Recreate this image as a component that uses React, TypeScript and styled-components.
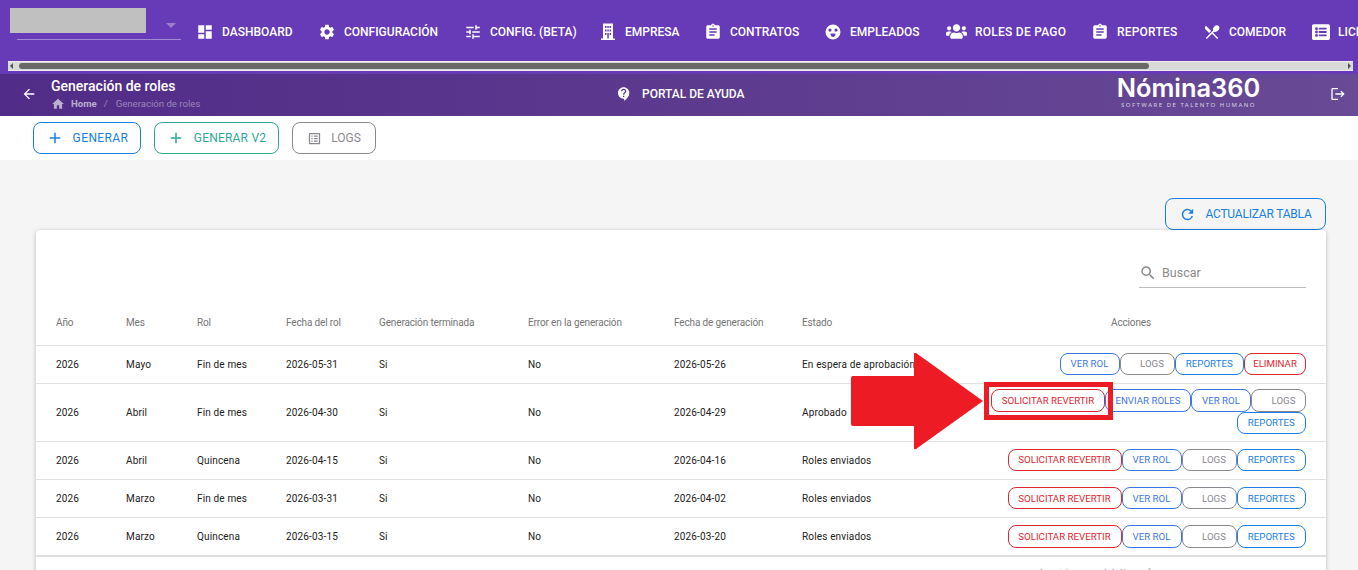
import React from 'react';
import styled, { createGlobalStyle } from 'styled-components';
import {
  MdDashboard, MdSettings, MdTune, MdAssignment, MdRestaurantMenu,
  MdArrowBack, MdHome, MdContactSupport, MdLogout, MdAdd, MdOutlineListAlt, MdRefresh, MdSearch,
} from 'react-icons/md';
import { FaUsers, FaListAlt } from 'react-icons/fa';

const GlobalStyle = createGlobalStyle`
  html, body { margin: 0; padding: 0; height: 100%; overflow: hidden; }
  body { font-family: Roboto, "Liberation Sans", sans-serif; background: #f5f5f5; }
`;

const Page = styled.div`
  position: relative;
  width: 1358px;
  height: 570px;
  overflow: hidden;
`;

const TopBar = styled.header`
  height: 74px;
  background: #673ab7;
  display: flex;
  flex-direction: column;
`;

const TopRow = styled.div`
  height: 61px;
  padding-left: 17px;
  display: flex;
  align-items: flex-start;
  overflow: hidden;
`;

const CompanySelect = styled.div`
  position: relative;
  flex: 0 0 164px;
  height: 39px;
  border-bottom: 1px solid rgba(255, 255, 255, 0.4);
  margin-right: 15px;
`;

const Redaction = styled.div`
  position: absolute;
  left: -7px;
  top: 8px;
  width: 136px;
  height: 25px;
  background: #c0c0c0;
`;

const Caret = styled.span`
  position: absolute;
  right: 5px;
  top: 23px;
  border-left: 5px solid transparent;
  border-right: 5px solid transparent;
  border-top: 5px solid rgba(255, 255, 255, 0.35);
`;

const Menu = styled.nav`
  display: flex;
  height: 63px;
  align-items: center;
  flex: none;
`;

const MenuItem = styled.a<{ $width: number; $tracking?: number }>`
  flex: 0 0 ${(p) => p.$width}px;
  display: flex;
  align-items: center;
  gap: 8px;
  color: #fff;
  font-size: 12px;
  font-weight: 500;
  letter-spacing: ${(p) => p.$tracking ?? 0}px;
  white-space: nowrap;
  svg { flex: none; }
`;

const ScrollTrack = styled.div`
  height: 10px;
  margin: 0 5px 0 8px;
  background: #d9d9d9;
  display: flex;
  align-items: center;
  border-top: 1px solid #eee;
  border-bottom: 1px solid #eee;
  box-sizing: border-box;
`;

const ScrollArrow = styled.span<{ $dir: 'left' | 'right' }>`
  flex: none;
  width: 0;
  height: 0;
  margin: 0 2px;
  border-top: 3px solid transparent;
  border-bottom: 3px solid transparent;
  ${(p) => (p.$dir === 'left' ? 'border-right: 3px solid #505050;' : 'border-left: 3px solid #505050;')}
`;

const ScrollThumb = styled.span`
  margin-left: 4px;
  width: 1130px;
  height: 6px;
  border-radius: 3px;
  background: #686868;
`;

const ScrollRest = styled.span`
  flex: 1;
`;

const SubHeader = styled.div`
  height: 42px;
  box-sizing: border-box;
  background: linear-gradient(90deg, #512c88 0%, #5c3a8e 50%, #684a96 100%);
  color: #fff;
  display: grid;
  grid-template-columns: 595px 501px 1fr auto;
  align-items: center;
  padding: 0 12px 2px 21px;
`;

const TitleGroup = styled.div`
  display: flex;
  align-items: center;
  gap: 14px;
`;

const TitleBlock = styled.div`
  display: flex;
  flex-direction: column;
  gap: 2px;
`;

const PageTitle = styled.div`
  font-size: 14px;
  font-weight: 500;
  line-height: 17px;
`;

const Crumbs = styled.div`
  display: flex;
  align-items: center;
  font-size: 9.6px;
  line-height: 14px;
  color: rgba(255, 255, 255, 0.42);
`;

const CrumbHome = styled.span`
  display: flex;
  align-items: center;
  gap: 6px;
  font-weight: 700;
  color: rgba(255, 255, 255, 0.62);
`;

const CrumbSep = styled.span`
  margin: 0 8px 0 7px;
`;

const HelpLink = styled.div`
  display: flex;
  align-items: center;
  gap: 10px;
  font-size: 12px;
  font-weight: 500;
`;

const Logo = styled.div`
  display: flex;
  flex-direction: column;
  align-items: center;
  width: 143px;
`;

const LogoName = styled.div`
  font-family: Inter, sans-serif;
  font-size: 25.4px;
  font-weight: 600;
  line-height: 24px;
  margin-top: -3px;
`;

const LogoTag = styled.div`
  font-family: "Noto Sans", sans-serif;
  font-size: 6px;
  line-height: 8px;
  margin-top: 1px;
  letter-spacing: 1.5px;
  color: rgba(255, 255, 255, 0.75);
  white-space: nowrap;
`;

const LogoutIcon = styled(MdLogout)`
  margin-left: 70px;
`;

const Toolbar = styled.div`
  height: 44px;
  background: #fff;
  display: flex;
  gap: 13px;
  padding: 6px 0 0 33px;
  box-sizing: border-box;
`;

const OutlineButton = styled.button<{ $color: string; $width: number; $tracking?: number }>`
  width: ${(p) => p.$width}px;
  height: 32px;
  box-sizing: border-box;
  border: 1px solid ${(p) => p.$color};
  border-radius: 8px;
  background: transparent;
  color: ${(p) => p.$color};
  font-family: inherit;
  font-size: 12px;
  font-weight: 400;
  letter-spacing: ${(p) => p.$tracking ?? 0}px;
  padding: 0;
  display: flex;
  align-items: center;
  justify-content: center;
  gap: 9px;
`;

const Content = styled.main`
  padding: 38px 32px 0 36px;
  display: flex;
  flex-direction: column;
  align-items: flex-end;
`;

const Card = styled.section`
  align-self: stretch;
  background: #fff;
  border-radius: 4px;
  box-shadow: 0 1px 4px rgba(0, 0, 0, 0.25);
  height: 400px;
`;

const SearchRow = styled.div`
  height: 58px;
  display: flex;
  justify-content: flex-end;
  align-items: flex-end;
  padding: 0 20px 0 0;
  box-sizing: border-box;
`;

const SearchBox = styled.div`
  width: 167px;
  height: 30px;
  box-sizing: border-box;
  border-bottom: 1px solid #bdbdbd;
  display: flex;
  align-items: center;
  gap: 5px;
  color: #8a8a8a;
  font-size: 12.5px;
`;

const Table = styled.table`
  width: 100%;
  table-layout: fixed;
  border-collapse: collapse;
  font-size: 10px;
  color: #212121;
`;

const Th = styled.th<{ $center?: boolean }>`
  height: 57px;
  padding: 12px ${(p) => (p.$center ? 36 : 0)}px 0 ${(p) => (p.$center ? 0 : 20)}px;
  box-sizing: border-box;
  border-bottom: 1px solid #e0e0e0;
  font-weight: 400;
  letter-spacing: -0.14px;
  color: #757575;
  text-align: ${(p) => (p.$center ? 'center' : 'left')};
`;

const Td = styled.td`
  height: 38.4px;
  padding: 0 0 0 20px;
  box-sizing: border-box;
  border-bottom: 1px solid #e0e0e0;
  letter-spacing: 0.15px;
  white-space: nowrap;
`;

const BodyRow = styled.tr`
  &:last-child td { border-bottom: 2px solid #e0e0e0; }
`;

const ActionsCell = styled.td`
  padding: 5.5px 20px 6.5px 0;
  border-bottom: 1px solid #e0e0e0;
`;

const ActionList = styled.div`
  display: flex;
  flex-wrap: wrap;
  justify-content: flex-end;
`;

const ActionButton = styled.button<{ $color: string; $width: number; $offset?: number }>`
  flex: 0 0 ${(p) => p.$width}px;
  height: 22.4px;
  box-sizing: border-box;
  border: 1px solid ${(p) => p.$color};
  border-radius: 8px;
  background: transparent;
  color: ${(p) => p.$color};
  font-family: inherit;
  font-size: 9.7px;
  padding: 0 0 0 ${(p) => p.$offset ?? 0}px;
  white-space: nowrap;
`;

const Arrow = styled.svg`
  position: absolute;
  left: 851px;
  top: 353px;
`;

const Callout = styled.div`
  position: absolute;
  left: 984px;
  top: 382px;
  width: 129px;
  height: 38px;
  box-sizing: border-box;
  border: 5px solid #ed1c24;
`;

const Watermark = styled.div`
  position: absolute;
  left: 1035px;
  top: 562px;
  font-family: "Open Sans", sans-serif;
  font-size: 20px;
  color: rgba(0, 0, 0, 0.28);
  white-space: nowrap;
`;

const BLUE = '#1a7fe2';
const INDIGO = '#3b78e4';
const RED = '#e0262f';
const GREY = '#8c8890';
const TEAL = '#2ba898';

type Role = {
  year: string; month: string; kind: string; date: string; done: string; err: string; gen: string; status: string;
  actions: string[];
};

const roles: Role[] = [
  { year: '2026', month: 'Mayo', kind: 'Fin de mes', date: '2026-05-31', done: 'Si', err: 'No', gen: '2026-05-26', status: 'En espera de aprobación', actions: ['VER ROL', 'LOGS', 'REPORTES', 'ELIMINAR'] },
  { year: '2026', month: 'Abril', kind: 'Fin de mes', date: '2026-04-30', done: 'Si', err: 'No', gen: '2026-04-29', status: 'Aprobado', actions: ['SOLICITAR REVERTIR', 'ENVIAR ROLES', 'VER ROL', 'LOGS', 'REPORTES'] },
  { year: '2026', month: 'Abril', kind: 'Quincena', date: '2026-04-15', done: 'Si', err: 'No', gen: '2026-04-16', status: 'Roles enviados', actions: ['SOLICITAR REVERTIR', 'VER ROL', 'LOGS', 'REPORTES'] },
  { year: '2026', month: 'Marzo', kind: 'Fin de mes', date: '2026-03-31', done: 'Si', err: 'No', gen: '2026-04-02', status: 'Roles enviados', actions: ['SOLICITAR REVERTIR', 'VER ROL', 'LOGS', 'REPORTES'] },
  { year: '2026', month: 'Marzo', kind: 'Quincena', date: '2026-03-15', done: 'Si', err: 'No', gen: '2026-03-20', status: 'Roles enviados', actions: ['SOLICITAR REVERTIR', 'VER ROL', 'LOGS', 'REPORTES'] },
];

const actionStyle: Record<string, { color: string; width: number; offset?: number }> = {
  'SOLICITAR REVERTIR': { color: RED, width: 114 },
  'ENVIAR ROLES': { color: INDIGO, width: 86 },
  'VER ROL': { color: INDIGO, width: 60 },
  LOGS: { color: GREY, width: 55, offset: 10 },
  REPORTES: { color: BLUE, width: 69.5 },
  ELIMINAR: { color: RED, width: 62 },
};

const BuildingIcon = () => (
  <svg width="18" height="18" viewBox="0 0 18 18" fill="#fff">
    <path
      fillRule="evenodd"
      d="M4 0.5h10v15h2v1.5H2v-1.5h2z M6 3v2h1.5V3z M8.3 3v2h1.5V3z M10.6 3v2h1.5V3z M6 6.5v2h1.5v-2z M8.3 6.5v2h1.5v-2z M10.6 6.5v2h1.5v-2z M6 10v2h1.5v-2z M8.3 10v5.5h1.5V10z M10.6 10v2h1.5v-2z"
    />
  </svg>
);

const FaceIcon = () => (
  <svg width="18" height="18" viewBox="0 0 18 18" fill="#fff">
    <path
      fillRule="evenodd"
      d="M9 1.5a7.5 7.5 0 1 0 0 15a7.5 7.5 0 0 0 0-15z M6 5.5a1.6 1.6 0 1 1 0 3.2a1.6 1.6 0 0 1 0-3.2z M12 5.5a1.6 1.6 0 1 1 0 3.2a1.6 1.6 0 0 1 0-3.2z M6.5 10.5h5c0 2-1 3.5-2.5 3.5s-2.5-1.5-2.5-3.5z"
    />
  </svg>
);

const menu = [
  { icon: <MdDashboard size={18} />, label: 'DASHBOARD', width: 122 },
  { icon: <MdSettings size={18} />, label: 'CONFIGURACIÓN', width: 146 },
  { icon: <MdTune size={18} />, label: 'CONFIG. (BETA)', width: 135 },
  { icon: <BuildingIcon />, label: 'EMPRESA', width: 105 },
  { icon: <MdAssignment size={18} />, label: 'CONTRATOS', width: 120 },
  { icon: <FaceIcon />, label: 'EMPLEADOS', width: 122 },
  { icon: <FaUsers size={21} />, label: 'ROLES DE PAGO', width: 145, tracking: 0.25 },
  { icon: <MdAssignment size={18} />, label: 'REPORTES', width: 112, tracking: 0.2 },
  { icon: <MdRestaurantMenu size={18} />, label: 'COMEDOR', width: 109 },
  { icon: <FaListAlt size={18} />, label: 'LICENCIAS', width: 100 },
];

const columns = [70, 71, 89, 93, 149, 146, 128, 190];

export default function App() {
  return (
    <Page>
      <GlobalStyle />
      <TopBar>
        <TopRow>
          <CompanySelect>
            <Redaction />
            <Caret />
          </CompanySelect>
          <Menu>
            {menu.map((m) => (
              <MenuItem key={m.label} $width={m.width} $tracking={m.tracking}>
                {m.icon}
                {m.label}
              </MenuItem>
            ))}
          </Menu>
        </TopRow>
        <ScrollTrack>
          <ScrollArrow $dir="left" />
          <ScrollThumb />
          <ScrollRest />
          <ScrollArrow $dir="right" />
        </ScrollTrack>
      </TopBar>

      <SubHeader>
        <TitleGroup>
          <MdArrowBack size={16} />
          <TitleBlock>
            <PageTitle>Generación de roles</PageTitle>
            <Crumbs>
              <CrumbHome><MdHome size={14} />Home</CrumbHome>
              <CrumbSep>/</CrumbSep>
              Generación de roles
            </Crumbs>
          </TitleBlock>
        </TitleGroup>
        <HelpLink><MdContactSupport size={16} />PORTAL DE AYUDA</HelpLink>
        <Logo>
          <LogoName>Nómina360</LogoName>
          <LogoTag>SOFTWARE DE TALENTO HUMANO</LogoTag>
        </Logo>
        <LogoutIcon size={16} />
      </SubHeader>

      <Toolbar>
        <OutlineButton $color={BLUE} $width={108} $tracking={0.4}><MdAdd size={18} />GENERAR</OutlineButton>
        <OutlineButton $color={TEAL} $width={125} $tracking={0.2}><MdAdd size={18} />GENERAR V2</OutlineButton>
        <OutlineButton $color={GREY} $width={84}><MdOutlineListAlt size={15} />LOGS</OutlineButton>
      </Toolbar>

      <Content>
        <OutlineButton $color={BLUE} $width={161} $tracking={-0.2}><MdRefresh size={17} />ACTUALIZAR TABLA</OutlineButton>
        <Card>
          <SearchRow>
            <SearchBox><MdSearch size={18} />Buscar</SearchBox>
          </SearchRow>
          <Table>
            <colgroup>
              {columns.map((w, i) => <col key={i} width={w} />)}
              <col />
            </colgroup>
            <thead>
              <tr>
                <Th>Año</Th>
                <Th>Mes</Th>
                <Th>Rol</Th>
                <Th>Fecha del rol</Th>
                <Th>Generación terminada</Th>
                <Th>Error en la generación</Th>
                <Th>Fecha de generación</Th>
                <Th>Estado</Th>
                <Th $center>Acciones</Th>
              </tr>
            </thead>
            <tbody>
              {roles.map((r, i) => (
                <BodyRow key={i}>
                  <Td>{r.year}</Td>
                  <Td>{r.month}</Td>
                  <Td>{r.kind}</Td>
                  <Td>{r.date}</Td>
                  <Td>{r.done}</Td>
                  <Td>{r.err}</Td>
                  <Td>{r.gen}</Td>
                  <Td>{r.status}</Td>
                  <ActionsCell>
                    <ActionList>
                      {r.actions.map((a) => (
                        <ActionButton key={a} $color={actionStyle[a].color} $width={actionStyle[a].width} $offset={actionStyle[a].offset}>{a}</ActionButton>
                      ))}
                    </ActionList>
                  </ActionsCell>
                </BodyRow>
              ))}
            </tbody>
          </Table>
        </Card>
      </Content>

      <Arrow width="133" height="97" viewBox="0 0 133 97">
        <path d="M65 0 L132 48 L65 96 L63 96 L63 73 L2 73 Q0 73 0 71 L0 25 Q0 23 2 23 L63 23 L63 0 Z" fill="#ed1c24" />
      </Arrow>
      <Callout />
      <Watermark>Activar Windows</Watermark>
    </Page>
  );
}
